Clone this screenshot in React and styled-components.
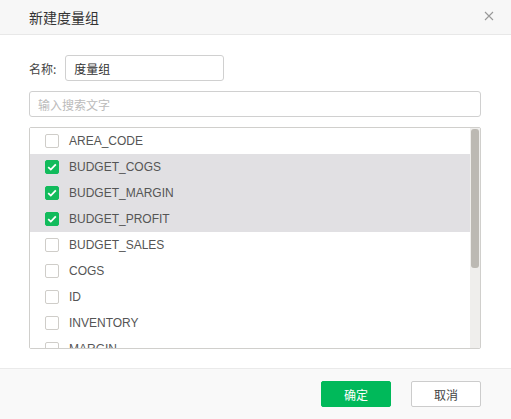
import React from "react";
import styled, { createGlobalStyle } from "styled-components";

const GlobalStyle = createGlobalStyle`
  html, body {
    margin: 0;
    padding: 0;
    background: #ffffff;
    font-family: "Liberation Sans", "Noto Sans CJK SC", Arial, sans-serif;
  }
`;

const Dialog = styled.div`
  width: 511px;
  height: 419px;
  display: flex;
  flex-direction: column;
  background: #fff;
  overflow: hidden;
`;

const Header = styled.div`
  height: 34px;
  flex: none;
  display: flex;
  align-items: center;
  justify-content: space-between;
  padding: 0 15px 0 29px;
  background: #f7f7f7;
  border-bottom: 1px solid #e8e8e8;
`;

const Title = styled.div`
  font-family: "Noto Sans CJK SC", sans-serif;
  font-size: 14px;
  color: #333;
`;

const Close = styled.button`
  border: none;
  background: none;
  padding: 0;
  width: 12px;
  height: 12px;
  display: flex;
  cursor: pointer;
`;

const Body = styled.div`
  flex: 1;
  padding: 20px 30px 0 29px;
  display: flex;
  flex-direction: column;
`;

const NameRow = styled.div`
  display: flex;
  align-items: center;
  gap: 9px;
`;

const Label = styled.span`
  font-family: "Noto Sans CJK SC", sans-serif;
  font-size: 12px;
  color: #444;
`;

const TextInput = styled.input`
  box-sizing: border-box;
  height: 26px;
  width: ${(p) => p.w || "100%"};
  border: 1px solid #d0d0d0;
  border-radius: 3px;
  padding: 0 8px;
  font-family: "Noto Sans CJK SC", sans-serif;
  font-size: 12px;
  color: #333;
  outline: none;
  &::placeholder {
    color: #bbb;
  }
`;

const Search = styled(TextInput)`
  margin-top: 10px;
`;

const List = styled.div`
  box-sizing: border-box;
  margin-top: 10px;
  height: 222px;
  width: 452px;
  border: 1px solid #d0cfcc;
  border-radius: 2px;
  display: flex;
`;

const Viewport = styled.div`
  flex: 1;
  overflow: hidden;
`;

const Track = styled.div`
  width: 8px;
  flex: none;
  background: #efeeec;
  border-radius: 0 2px 2px 0;
  padding: 1px 1px 0;
`;

const Thumb = styled.div`
  height: ${(p) => p.h}px;
  background: #bcb9b3;
  border-radius: 3px;
`;

const Row = styled.label`
  height: 26px;
  display: flex;
  align-items: center;
  padding-left: 15px;
  gap: 10px;
  background: ${(p) => (p.checked ? "#e1e0e3" : "#fff")};
  font-size: 12px;
  color: #555;
  cursor: pointer;
`;

const Box = styled.span`
  box-sizing: border-box;
  width: 14px;
  height: 14px;
  border-radius: 2px;
  border: 1px solid ${(p) => (p.checked ? "#12bb5c" : "#cfcdc9")};
  background: ${(p) => (p.checked ? "#12bb5c" : "#fff")};
  display: flex;
  align-items: center;
  justify-content: center;
`;

const Footer = styled.div`
  height: 50px;
  flex: none;
  background: #f9f9f9;
  border-top: 1px solid #eaeaea;
  display: flex;
  align-items: center;
  justify-content: flex-end;
  gap: 20px;
  padding-right: 30px;
`;

const Button = styled.button`
  box-sizing: border-box;
  width: 70px;
  height: 26px;
  border-radius: 2px;
  font-family: "Noto Sans CJK SC", sans-serif;
  font-size: 12px;
  cursor: pointer;
  border: 1px solid ${(p) => (p.primary ? "#00b95a" : "#cccccc")};
  background: ${(p) => (p.primary ? "#00b95a" : "#fff")};
  color: ${(p) => (p.primary ? "#fff" : "#444")};
`;

const fields = [
  "AREA_CODE",
  "BUDGET_COGS",
  "BUDGET_MARGIN",
  "BUDGET_PROFIT",
  "BUDGET_SALES",
  "COGS",
  "ID",
  "INVENTORY",
  "MARGIN",
];

const Check = () => (
  <svg width="10" height="8" viewBox="0 0 10 8">
    <path d="M1.2 4.2 L3.8 6.6 L8.8 1.4" fill="none" stroke="#fff" strokeWidth="1.8" />
  </svg>
);

export default function App() {
  const [selected, setSelected] = React.useState(["BUDGET_COGS", "BUDGET_MARGIN", "BUDGET_PROFIT"]);
  const toggle = (f) =>
    setSelected((s) => (s.includes(f) ? s.filter((x) => x !== f) : [...s, f]));

  return (
    <>
      <GlobalStyle />
      <Dialog>
        <Header>
          <Title>新建度量组</Title>
          <Close>
            <svg width="10" height="10" viewBox="0 0 10 10">
              <path d="M1 1 L9 9 M9 1 L1 9" stroke="#999" strokeWidth="1.1" />
            </svg>
          </Close>
        </Header>
        <Body>
          <NameRow>
            <Label>名称:</Label>
            <TextInput w="159px" defaultValue="度量组" />
          </NameRow>
          <Search placeholder="输入搜索文字" />
          <List>
            <Viewport>
              {fields.map((f) => {
                const on = selected.includes(f);
                return (
                  <Row key={f} checked={on} onClick={() => toggle(f)}>
                    <Box checked={on}>{on && <Check />}</Box>
                    {f}
                  </Row>
                );
              })}
            </Viewport>
            <Track>
              <Thumb h={139} />
            </Track>
          </List>
        </Body>
        <Footer>
          <Button primary>确定</Button>
          <Button>取消</Button>
        </Footer>
      </Dialog>
    </>
  );
}
